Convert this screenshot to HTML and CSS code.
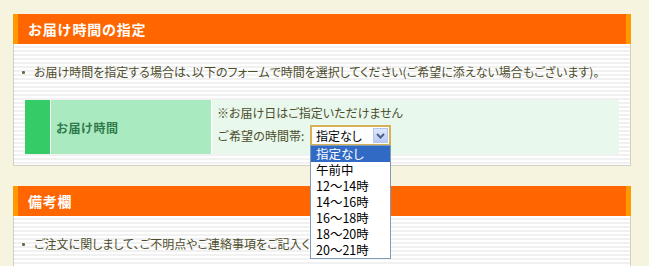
FILE: index.html
```html
<!DOCTYPE html>
<html lang="ja">
<head>
<meta charset="utf-8">
<link rel="stylesheet" href="styles.css">
</head>
<body>
<div class="page">
  <section class="panel">
    <h2 class="panel-head">お届け時間の指定</h2>
    <div class="panel-body">
      <ul class="notes">
        <li>お届け時間を指定する場合は、以下のフォームで時間を選択してください(ご希望に添えない場合もございます)。</li>
      </ul>
      <div class="form-row">
        <div class="mark"></div>
        <div class="label">お届け時間</div>
        <div class="field">
          <p class="note">※お届け日はご指定いただけません</p>
          <div class="time-line">
            <span class="time-label">ご希望の時間帯:</span>
            <div class="select">
              <div class="select-box">
                <span class="select-value">指定なし</span>
                <span class="select-btn">
                  <svg width="9" height="6" viewBox="0 0 9 6"><path d="M1 1 L4.5 4.5 L8 1" fill="none" stroke="#4d6185" stroke-width="2"/></svg>
                </span>
              </div>
              <ul class="options">
                <li class="selected">指定なし</li>
                <li>午前中</li>
                <li>12～14時</li>
                <li>14～16時</li>
                <li>16～18時</li>
                <li>18～20時</li>
                <li>20～21時</li>
              </ul>
            </div>
          </div>
        </div>
      </div>
    </div>
  </section>
  <section class="panel">
    <h2 class="panel-head">備考欄</h2>
    <div class="panel-body last">
      <ul class="notes">
        <li>ご注文に関しまして、ご不明点やご連絡事項をご記入ください。</li>
      </ul>
    </div>
  </section>
</div>
</body>
</html>
```

FILE: styles.css
```css
html, body {
  margin: 0;
  padding: 0;
  background: #f6f3de;
  font-family: "Noto Sans CJK JP", "Noto Sans", sans-serif;
  font-size: 12px;
  color: #4d4d2c;
  overflow: hidden;
}
.page {
  padding: 14px 18px 0 13px;
  width: 618px;
}
.panel {
  margin-bottom: 20px;
}
.panel-head {
  margin: 0;
  height: 30px;
  line-height: 30px;
  background: #ff6600;
  border-left: 5px solid #ff9900;
  border-right: 5px solid #ff9900;
  color: #fff;
  font-size: 14px;
  font-weight: bold;
  letter-spacing: 0.8px;
  padding-left: 10px;
}
.panel-body {
  border: 1px solid #d2cfc4;
  border-top: 0;
  background: repeating-linear-gradient(#fff 0 2px, #f1f1f1 2px 4px);
  padding: 20px 11px 11px 10px;
}
.panel-body.last {
  height: 30px;
  padding-bottom: 0;
  border-bottom: 0;
}
.notes {
  margin: 0;
  padding: 0;
  list-style: none;
}
.notes li {
  position: relative;
  padding-left: 10px;
  line-height: 16px;
  font-feature-settings: "palt";
}
.notes li::before {
  content: "";
  position: absolute;
  left: -2px;
  top: 7px;
  width: 3px;
  height: 3px;
  background: #6b6b4a;
  border-radius: 1px;
}
.form-row {
  display: flex;
  gap: 1px;
  background: #fff;
  margin: 20px 0 0 1px;
  height: 54px;
}
.mark {
  width: 25px;
  background: #33cc66;
}
.label {
  width: 155px;
  padding-left: 5px;
  background: #aaeac0;
  color: #2f7a4b;
  font-weight: bold;
  letter-spacing: 0.5px;
  display: flex;
  align-items: center;
}
.field {
  flex: 1;
  background: #e8f8ec;
  padding: 5px 0 0 5px;
  font-feature-settings: "palt";
}
.note {
  margin: 0;
  line-height: 16px;
}
.time-line {
  display: flex;
  align-items: center;
  margin-top: 4px;
  gap: 4px;
}
.time-label {
  font-feature-settings: normal;
  width: 89px;
}
.select {
  position: relative;
  width: 81px;
}
.select-box {
  box-sizing: border-box;
  height: 21px;
  border: 2px solid #d8b055;
  background: #fff;
  display: flex;
  align-items: center;
  justify-content: space-between;
  padding: 0 1px 0 4px;
  color: #000;
}
.select-btn {
  width: 15px;
  height: 15px;
  box-sizing: border-box;
  border: 1px solid #b4c6ee;
  background: linear-gradient(#dfe8fd, #b9cbf6);
  display: flex;
  align-items: center;
  justify-content: center;
}
.options {
  position: absolute;
  left: 0;
  top: 20px;
  margin: 0;
  padding: 0;
  list-style: none;
  width: 81px;
  box-sizing: border-box;
  border: 1px solid #7f9db9;
  background: #fff;
  color: #000;
  z-index: 5;
}
.options li {
  height: 16px;
  line-height: 16px;
  padding-left: 5px;
  font-size: 12.5px;
}
.options li.selected {
  background: #316ac5;
  color: #fff;
}
```
